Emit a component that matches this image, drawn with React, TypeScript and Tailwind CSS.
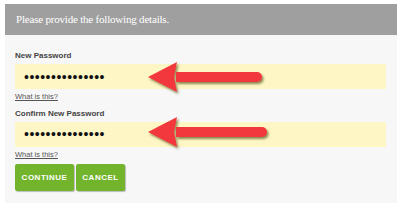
import React from 'react';

const Arrow: React.FC<{ className: string; length: number }> = ({ className, length }) => (
  <svg className={className} width={length + 6} height={36} viewBox={`0 0 ${length + 6} 36`} fill="none">
    <defs>
      <filter id="arrowShadow" x="-10%" y="-20%" width="130%" height="160%">
        <feDropShadow dx="1.5" dy="2" stdDeviation="1.2" floodColor="#5a5a1e" floodOpacity="0.7" />
      </filter>
    </defs>
    <g filter="url(#arrowShadow)">
      <path d={`M29 12 H${length - 5} a5 5 0 0 1 0 10 H29 Z`} fill="#f2383c" />
      <path d="M1 17 L30 2 L27 17 L30 32 Z" fill="#f2383c" />
    </g>
  </svg>
);

const Field: React.FC<{ label: string }> = ({ label }) => (
  <div className="flex flex-col">
    <label className="text-[8px] font-bold text-[#444] leading-none mb-[4px]">{label}</label>
    <div className="h-[25px] w-[371px] bg-[#fff6c6] flex items-center pl-[9px] text-[14px] tracking-[0.5px] text-[#111] leading-none">
      •••••••••••••••
    </div>
    <a className="mt-[4px] text-[7.5px] leading-none text-[#555] underline">What is this?</a>
  </div>
);

export default function App() {
  return (
    <div className="w-[401px] h-[208px] bg-white pt-[4px] px-[5px] relative" style={{ fontFamily: '"Liberation Sans", Arial, sans-serif' }}>
      <div className="w-[392px] h-[31px] bg-[#9f9f9f] flex items-center pl-[11px]">
        <h1 className="text-white text-[11px] tracking-[-0.2px] leading-none" style={{ fontFamily: '"Liberation Serif", "DejaVu Serif", serif' }}>
          Please provide the following details.
        </h1>
      </div>
      <div className="w-[392px] h-[168px] bg-[#f7f7f7] pl-[10px] pt-[17px] flex flex-col">
        <Field label="New Password" />
        <div className="h-[9px]" />
        <Field label="Confirm New Password" />
        <div className="flex gap-[2px] mt-[6px]">
          <button className="w-[59px] h-[27px] bg-[#72b52c] text-white text-[8px] font-bold tracking-[0.5px] rounded-[2px] shadow-[1px_1px_1px_rgba(0,0,0,0.25)]">CONTINUE</button>
          <button className="w-[49px] h-[27px] bg-[#72b52c] text-white text-[8px] font-bold tracking-[0.5px] rounded-[2px] shadow-[1px_1px_1px_rgba(0,0,0,0.25)]">CANCEL</button>
        </div>
      </div>
      <Arrow className="absolute left-[147px] top-[60px]" length={115} />
      <Arrow className="absolute left-[147px] top-[115px]" length={120} />
    </div>
  );
}
